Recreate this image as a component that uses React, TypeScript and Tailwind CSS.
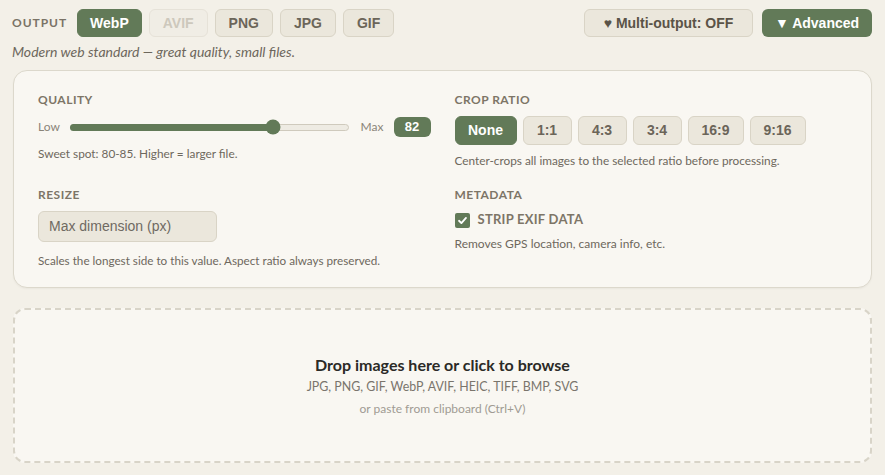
import React, { useState } from "react";

const GREEN = "bg-[#627a58]";

const formats = ["WebP", "AVIF", "PNG", "JPG", "GIF"];
const ratios = ["None", "1:1", "4:3", "3:4", "16:9", "9:16"];

function FormatButton({ label, active, disabled }: { label: string; active?: boolean; disabled?: boolean }) {
  let cls = "border-[#d9d4c6] bg-[#ebe7dc] text-[#6b6559]";
  if (active) cls = "border-[#627a58] bg-[#627a58] text-white";
  if (disabled) cls = "border-[#e6e2d8] bg-[#f0ede5] text-[#cdc8bc]";
  return (
    <button
      className={`h-7 rounded-[6px] border text-[14px] font-bold leading-none ${active ? "px-3" : "px-[13px]"} ${cls}`}
      style={{ fontFamily: '"Liberation Sans", Arial, sans-serif' }}
    >
      {label}
    </button>
  );
}

function SectionLabel({ children }: { children: React.ReactNode }) {
  return (
    <div className="text-[12px] font-bold uppercase leading-4 tracking-[0.04em] text-[#7d7567]">{children}</div>
  );
}

export default function App() {
  const [ratio, setRatio] = useState("None");
  const quality = 73;

  return (
    <div
      className="min-h-screen bg-[#f3f0e8] px-[13px] pt-[9px]"
      style={{ fontFamily: 'Lato, "Open Sans", sans-serif' }}
    >
      {/* output format bar */}
      <div className="flex h-7 items-center justify-between">
        <div className="flex items-center gap-[7px]">
          <span className="-ml-px mr-[3px] text-[12px] font-bold tracking-[0.08em] text-[#7a7366]">OUTPUT</span>
          {formats.map((f) => (
            <FormatButton key={f} label={f} active={f === "WebP"} disabled={f === "AVIF"} />
          ))}
        </div>
        <div
          className="flex items-center gap-[9px]"
          style={{ fontFamily: '"Liberation Sans", Arial, sans-serif' }}
        >
          <button className="h-7 w-[169px] rounded-[6px] border border-[#d9d4c6] bg-[#ebe7dc] text-[14px] font-bold text-[#5a5347]">
            ♥ Multi-output: OFF
          </button>
          <button className={`h-7 w-[110px] rounded-[6px] ${GREEN} text-[14px] font-bold text-white`}>
            ▼ Advanced
          </button>
        </div>
      </div>

      <p className="-ml-px mt-[6px] text-[14px] italic leading-[17px] text-[#6d675c]">
        Modern web standard — great quality, small files.
      </p>

      {/* advanced settings card */}
      <div className="mt-[10px] rounded-[14px] border border-[#dcd8cc] bg-[#f9f7f2] px-6 pb-[19px] pt-[21px] shadow-[0_1px_2px_rgba(0,0,0,0.04)]">
        <div className="grid grid-cols-2 gap-x-6 gap-y-[18px]">
          {/* quality */}
          <div>
            <SectionLabel>Quality</SectionLabel>
            <div className="mt-[9px] flex h-5 items-center text-[12px] text-[#8a8478]">
              <span>Low</span>
              <div className="relative ml-[10px] mr-3 h-[7px] flex-1 rounded-full border border-[#cfcabd] bg-[#eeebe3]">
                <div
                  className={`absolute -left-px -top-px h-[7px] rounded-full ${GREEN}`}
                  style={{ width: `${quality}%` }}
                />
                <div
                  className={`absolute top-1/2 h-[15px] w-[15px] -translate-x-1/2 -translate-y-1/2 rounded-full ${GREEN}`}
                  style={{ left: `${quality}%` }}
                />
              </div>
              <span>Max</span>
              <span
                className={`ml-[10px] flex h-5 w-[37px] items-center justify-center rounded-[6px] ${GREEN} text-[13px] font-bold text-white`}
                style={{ fontFamily: '"Liberation Sans", Arial, sans-serif' }}
              >
                82
              </span>
            </div>
            <p className="mt-[9px] text-[11.8px] leading-4 text-[#6e685d]">Sweet spot: 80-85. Higher = larger file.</p>
          </div>

          {/* crop ratio */}
          <div>
            <SectionLabel>Crop Ratio</SectionLabel>
            <div className="mt-2 flex gap-[6px]" style={{ fontFamily: '"Liberation Sans", Arial, sans-serif' }}>
              {ratios.map((r) => (
                <button
                  key={r}
                  onClick={() => setRatio(r)}
                  className={`h-[29px] rounded-[6px] border px-3 text-[14px] font-bold ${
                    ratio === r
                      ? "border-[#627a58] bg-[#627a58] text-white"
                      : "border-[#d9d4c6] bg-[#ebe7dc] text-[#6b6559]"
                  } ${r === "None" ? "w-[62px]" : r.length > 3 ? "w-[56px]" : "w-[49px]"}`}
                >
                  {r}
                </button>
              ))}
            </div>
            <p className="mt-2 text-[11.8px] leading-4 text-[#6e685d]">
              Center-crops all images to the selected ratio before processing.
            </p>
          </div>

          {/* resize */}
          <div>
            <SectionLabel>Resize</SectionLabel>
            <div
              className="mt-2 flex h-[31px] w-[179px] items-center rounded-[6px] border border-[#d9d4c6] bg-[#ebe7dc] px-[10px] text-[14px] text-[#6f6a62]"
              style={{ fontFamily: '"Liberation Sans", Arial, sans-serif' }}
            >
              Max dimension (px)
            </div>
            <p className="mt-[10px] text-[11.7px] leading-4 text-[#6e685d]">
              Scales the longest side to this value. Aspect ratio always preserved.
            </p>
          </div>

          {/* metadata */}
          <div>
            <SectionLabel>Metadata</SectionLabel>
            <div className="mt-[9px] flex h-4 items-center gap-2">
              <span className={`flex h-[15px] w-[15px] items-center justify-center rounded-[2px] ${GREEN}`}>
                <svg width="11" height="11" viewBox="0 0 12 12" fill="none">
                  <path d="M2.2 6.3 L4.8 8.8 L9.8 3.2" stroke="white" strokeWidth="2" strokeLinecap="round" strokeLinejoin="round" />
                </svg>
              </span>
              <span className="text-[13px] font-bold tracking-[0.02em] text-[#7d7567]">STRIP EXIF DATA</span>
            </div>
            <p className="mt-2 text-[12px] leading-4 text-[#6e685d]">Removes GPS location, camera info, etc.</p>
          </div>
        </div>
      </div>

      {/* drop zone */}
      <div className="mt-5 flex h-[155px] flex-col items-center justify-center rounded-xl border-2 border-dashed border-[#d8d4c8] bg-[#f9f7f2]">
        <div className="text-[16px] font-bold leading-[22px] text-[#2b2a27]">Drop images here or click to browse</div>
        <div className="mt-[2px] text-[12.4px] leading-[18px] text-[#7a756c]">
          JPG, PNG, GIF, WebP, AVIF, HEIC, TIFF, BMP, SVG
        </div>
        <div className="mt-[5px] text-[12px] leading-4 text-[#a09b92]">or paste from clipboard (Ctrl+V)</div>
      </div>
    </div>
  );
}
